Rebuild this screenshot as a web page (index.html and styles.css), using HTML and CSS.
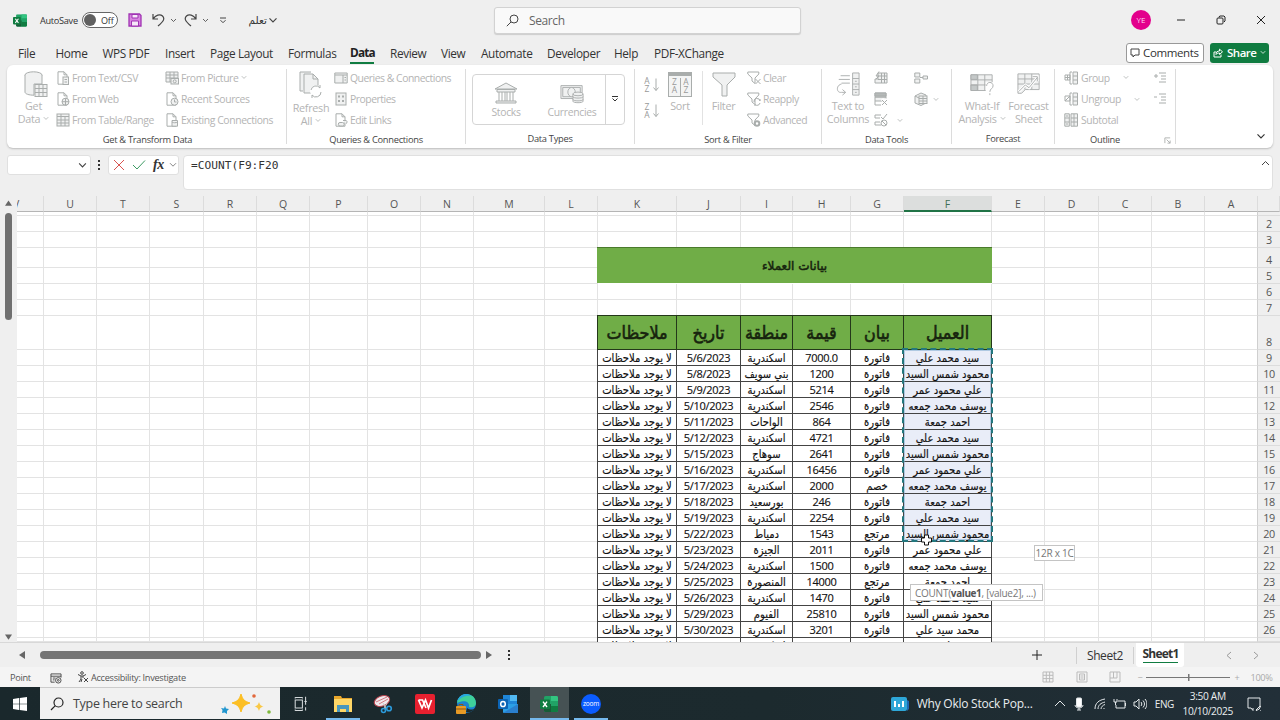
FILE: index.html
```html
<!DOCTYPE html>
<html lang="en">
<head>
<meta charset="utf-8">
<title>Excel</title>
<link rel="stylesheet" href="styles.css">
</head>
<body>
<svg class="defs" width="0" height="0">
  <symbol id="chev" viewBox="0 0 8 6"><path d="M1 1.200 4 4.200 7 1.200"/></symbol>
  <symbol id="doc" viewBox="0 0 14 14"><path class="f" d="M2 .8h6l3 3v9.400H2z"/><path d="M8 .8v3h3"/></symbol>
  <symbol id="funnel" viewBox="0 0 14 14"><path class="f" d="M.8 1h11v2L8 7v5.500L5 10V7L.8 3z"/></symbol>
  <symbol id="xl" viewBox="0 0 18 16"><rect x="4" y="0" width="14" height="16" rx="1.500" fill="#21a366"/><path d="M4 8h7v8H5.500A1.500 1.500 0 0 1 4 14.500z" fill="#185c37"/><path d="M11 0h5.500A1.500 1.500 0 0 1 18 1.500V5h-7z" fill="#33c481"/><path d="M11 10h7v4.500a1.500 1.500 0 0 1-1.500 1.500H11z" fill="#107c41"/><rect x="0" y="3.500" width="10" height="9.500" rx="1" fill="#107c41"/><path d="M3 5.700 7 11M7 5.700 3 11" stroke="#fff" stroke-width="1.400"/></symbol>
</svg>

<header class="titlebar">
  <svg class="app" viewBox="0 0 18 16"><use href="#xl"/></svg>
  <span class="autosave">AutoSave</span>
  <span class="toggle"><i></i>Off</span>
  <svg class="save" viewBox="0 0 14 14"><path d="M1 1h10.500L13 2.500V13H1z" fill="#d884e0" stroke="#a033b3" stroke-width="1.300"/><path d="M4 1.500h6v3.500H4zM3.500 8h7v5h-7z" fill="#f6e8f8" stroke="#a033b3"/></svg>
  <svg class="undo" viewBox="0 0 13 14"><path d="M1 1v5h5M1.300 5.700C3.500 2 8 .8 10.500 3c3 3 .5 5.500-4.500 10"/></svg>
  <svg class="chev c1"><use href="#chev"/></svg>
  <svg class="redo" viewBox="0 0 13 14"><path d="M12 1v5H7M11.700 5.700C9.500 2 5 .8 2.500 3c-3 3-.5 5.500 4.500 10"/></svg>
  <svg class="chev c2"><use href="#chev"/></svg>
  <svg class="custom" viewBox="0 0 8 7"><path d="M1 1h6M1.500 3.200 4 5.700 6.500 3.200"/></svg>
  <span class="docname" dir="rtl">تعلم</span>
  <svg class="chev c3"><use href="#chev"/></svg>
  <div class="search"><svg viewBox="0 0 13 13"><circle cx="8" cy="5" r="4"/><path d="M5 8 .8 12.200"/></svg>Search</div>
  <span class="avatar">YE</span>
  <svg class="win min" viewBox="0 0 10 10"><path d="M1 5h8"/></svg>
  <svg class="win max" viewBox="0 0 10 10"><rect x="1" y="3" width="6" height="6" rx="1"/><path d="M3 2.500V1.800L4 1h4l1 1v4L8 7"/></svg>
  <svg class="win cls" viewBox="0 0 10 10"><path d="M1 1l8 8M9 1 1 9"/></svg>
</header>

<nav class="tabs">
  <span>File</span><span>Home</span><span>WPS PDF</span><span>Insert</span><span>Page Layout</span><span>Formulas</span><span class="on"><b>Data</b></span><span>Review</span><span>View</span><span>Automate</span><span>Developer</span><span>Help</span><span>PDF-XChange</span>
  <div class="comments"><svg viewBox="0 0 10 10"><path d="M1 1h8v6H5L3 9V7H1z"/></svg>Comments</div>
  <div class="share"><svg viewBox="0 0 10 10"><path d="M3.500 4H1v5h7V6.500M3 6.500C3 4 4.500 3 6.500 3V1.200l3 2.600-3 2.600V5C5 5 4 5.300 3 6.500z"/></svg>Share<svg class="sc"><use href="#chev"/></svg></div>
</nav>

<section class="ribbon">
  <div class="group g1">
    <div class="body">
      <div class="big"><svg viewBox="0 0 24 27"><ellipse class="f" cx="9.500" cy="4" rx="8.500" ry="3.200"/><path class="f" d="M1 4v17c0 2 4 3.200 9 3.200V13h8V4"/><rect class="f" x="11" y="13.500" width="12" height="12"/><path d="M11 17.500h12M11 21.500h12M15 14v11M19 14v11"/></svg><span>Get</span><span>Data <svg class="mc"><use href="#chev"/></svg></span></div>
      <div class="list">
        <div><svg viewBox="0 0 14 14"><use href="#doc"/><rect class="f" x="7" y="6" width="5.500" height="7.500"/><path d="M8.500 8.500h2.500M8.500 11h2.500"/></svg>From Text/CSV</div>
        <div><svg viewBox="0 0 14 14"><use href="#doc"/><circle class="f" cx="9.500" cy="9.700" r="3.500"/><path d="M6 9.700h7M9.500 6.200v7"/></svg>From Web</div>
        <div><svg viewBox="0 0 14 14"><rect class="f" x="1" y="1" width="12" height="12"/><path d="M1 3.500h12M1 7h12M1 10h12M5 1v12M9 3v10"/></svg>From Table/Range</div>
      </div>
      <div class="list">
        <div><svg viewBox="0 0 14 14"><path class="f" d="M1 1h12v10H1z"/><path d="M1 4h12M1 7h12M5 1v10M9 1v6"/><rect class="f" x="6" y="7.500" width="7.500" height="5.500"/><circle cx="9.700" cy="10.300" r="1.500"/></svg>From Picture <svg class="mc"><use href="#chev"/></svg></div>
        <div><svg viewBox="0 0 14 14"><use href="#doc"/><circle class="f" cx="9.500" cy="9.700" r="3.500"/><path d="M9.500 7.500v2.500h2"/></svg>Recent Sources</div>
        <div><svg viewBox="0 0 14 14"><use href="#doc"/><path class="f" d="M7 7.500h5.500v5.700H7zM7 9c1.500 1 4 1 5.500 0"/></svg>Existing Connections</div>
      </div>
    </div>
    <div class="label">Get &amp; Transform Data</div>
  </div>
  <div class="group g2">
    <div class="body">
      <div class="big low"><svg viewBox="0 0 24 27"><path class="f" d="M4 20H1V1h11"/><path class="f" d="M5 3h9l5 5v14H5z"/><path d="M14 3v5h5"/><circle cx="17" cy="20" r="6" fill="#fff" stroke="none"/><path d="M12 19a5 5 0 0 1 9-2v-3M22 21a5 5 0 0 1-9 3v3"/></svg><span>Refresh</span><span>All <svg class="mc"><use href="#chev"/></svg></span></div>
      <div class="list">
        <div><svg viewBox="0 0 14 14"><path class="f" d="M.8 2h12.400v10H.8z"/><path d="M1 4h12M9 4v8M10.500 6.500h1.500M10.500 9h1.500"/></svg>Queries &amp; Connections</div>
        <div><svg viewBox="0 0 14 14"><rect class="f" x="2" y="1" width="10" height="12"/><path d="M4 4.500h2M4 9h2M8 4.500h2M8 9h2" stroke-width="2"/></svg>Properties</div>
        <div><svg viewBox="0 0 14 14"><use href="#doc"/><path class="f" d="M6 9.500h2.500a1.500 1.500 0 0 1 0 3.500H6a1.500 1.500 0 0 1 0-3.500M9 7.500h2a1.500 1.500 0 0 1 1 3"/></svg>Edit Links</div>
      </div>
    </div>
    <div class="label">Queries &amp; Connections</div>
  </div>
  <div class="group g3">
    <div class="body">
      <div class="gallery">
        <div><svg viewBox="0 0 24 22"><path class="f" d="M1 7 12 1l11 6zM3 7.500h18V10H3zM2 19h20v2H2z"/><path d="M5 10v9M8 10v9M11 10v9M13 10v9M16 10v9M19 10v9"/></svg>Stocks</div>
        <div><svg viewBox="0 0 26 22"><path class="f" d="M1 3h23v14H1z"/><path d="M3 5h19v10H3z"/><ellipse class="f" cx="12.500" cy="10" rx="4" ry="5"/><path class="f" d="M14 12v8c0 2 11 2 11 0v-8z"/><ellipse class="f" cx="19.500" cy="12" rx="5.500" ry="2"/><path d="M14 15c0 2 11 2 11 0M14 18c0 2 11 2 11 0"/></svg>Currencies</div>
        <div class="more"><svg viewBox="0 0 8 7"><path d="M1 1h6M1.500 3 4 5.500 6.500 3"/></svg></div>
      </div>
    </div>
    <div class="label">Data Types</div>
  </div>
  <div class="group g4">
    <div class="body">
      <div class="az">
        <div><i>A<br>Z</i><svg viewBox="0 0 6 14"><path d="M3 1v12M.5 10 3 13l2.500-3"/></svg></div>
        <div><i>Z<br>A</i><svg viewBox="0 0 6 14"><path d="M3 1v12M.5 10 3 13l2.500-3"/></svg></div>
      </div>
      <div class="big sort"><div class="sorticon"><i>Z<br>A</i><i>A<br>Z</i></div><span>Sort</span></div>
      <div class="big filter"><svg viewBox="0 0 24 27"><path class="f" d="M1 2h22v4l-8 8v11H10V14L1 6z"/></svg><span>Filter</span></div>
      <div class="list">
        <div><svg viewBox="0 0 14 14"><use href="#funnel"/><path d="M8.500 8l5 5M13.500 8l-5 5"/></svg>Clear</div>
        <div><svg viewBox="0 0 14 14"><use href="#funnel"/><path d="M7 10a3 3 0 0 1 6-1V7M13 11a3 3 0 0 1-5 1.500V14"/></svg>Reapply</div>
        <div><svg viewBox="0 0 14 14"><use href="#funnel"/><circle cx="10" cy="10.500" r="2.300" stroke-width="2"/></svg>Advanced</div>
      </div>
    </div>
    <div class="label">Sort &amp; Filter</div>
  </div>
  <div class="group g5">
    <div class="body">
      <div class="big"><svg viewBox="0 0 26 27"><path d="M5 4h10M3 8h12M6 12h9M6 13C0 14 0 23 6 22h4M7 19l3.500 3L7 25"/><path class="f" d="M18 1h7v24h-7z"/><path d="M18 7h7M18 13h7M18 19h7M20.500 10h2M20.500 16h2M20.500 22h2"/></svg><span>Text to</span><span>Columns</span></div>
      <div class="tools">
        <svg viewBox="0 0 14 14"><path class="f" d="M4 2h9v10H1V8h3zM4 5h9M4 8.500h9M7.500 2v10M10.500 2v10M5 .5 2 5h3L2 8"/></svg>
        <svg viewBox="0 0 14 14"><path class="f" d="M1 1h11v4H1zM1 5h11v4H1z"/><path d="M1 1h11v3H1z" fill="#b5b9b8"/><path d="M1 9v4h6"/><path d="M8 7l5 6M13 7l-5 6" stroke="#fff" stroke-width="3"/><path d="M8 8l5 5M13 8l-5 5"/></svg>
        <svg viewBox="0 0 14 14"><path d="M7 2H1v3h5M6 9H1v3h6M7 4l2 2 4-5"/><circle cx="10" cy="10" r="3"/><path d="M8 8l4 4"/></svg>
      </div>
      <div class="tools t2"><svg class="mc"><use href="#chev"/></svg></div>
      <div class="tools t3">
        <svg viewBox="0 0 14 14"><path class="f" d="M.8 2h5v4h-5zM.8 8h5v4h-5zM9 5h4.500v3H9z"/><path d="M6 6.500h3"/></svg>
        <div class="pair"><svg viewBox="0 0 14 14"><path class="f" d="M1 4 7 1l5 2v8l-5 2.500L1 11z"/><rect class="f" x="5" y="4" width="8" height="7.500"/><path d="M5 6.500h8M5 9h8M9 4v7M1 4l4 2"/></svg><svg class="mc"><use href="#chev"/></svg></div>
      </div>
    </div>
    <div class="label">Data Tools</div>
  </div>
  <div class="group g6">
    <div class="body">
      <div class="big"><svg viewBox="0 0 26 27"><path class="f" d="M1 3h23v17H1z"/><path d="M1 3h7v5H1zM1 14h7v6H1z" fill="#c4c8c8"/><path d="M1 8.500h23M1 14h23M8.500 3v17M16 3v17"/><rect x="17" y="11" width="9" height="16" fill="#fff" stroke="none"/><path d="M18 15c0-5 7-5 7 0 0 3-3.500 3-3.500 6.500M21.500 23v2"/></svg><span>What-If</span><span>Analysis <svg class="mc"><use href="#chev"/></svg></span></div>
      <div class="big"><svg viewBox="0 0 26 27"><path class="f" d="M1 2h23v17H9l-4 4H1z"/><path d="M1 7.500h23M1 13h23M8.500 2v17M16 2v17"/><path d="M2 21l7-7 4 3 9-11M17 5h5v5" stroke="#fff" stroke-width="3"/><path d="M2 21l7-7 4 3 9-11M17 5h5v5"/></svg><span>Forecast</span><span>Sheet</span></div>
    </div>
    <div class="label">Forecast</div>
  </div>
  <div class="group g7">
    <div class="body">
      <div class="list">
        <div><svg viewBox="0 0 14 14"><path class="f" d="M9 1h4.500v12H9z"/><path d="M9 5h4.500M9 9h4.500M8 1H6v12h2M1 4h5v5H1zM1 6.500h5M3.500 4v5"/></svg>Group <svg class="mc m1"><use href="#chev"/></svg></div>
        <div><svg viewBox="0 0 14 14"><path class="f" d="M9 1h4.500v12H9z"/><path d="M9 5h4.500M9 9h4.500M8 1H6v12h2M1 4h5v5H1zM1 9l5-5"/></svg>Ungroup <svg class="mc m2"><use href="#chev"/></svg></div>
        <div><svg viewBox="0 0 14 14"><path class="f" d="M.8.8h4.500v12.400H.8zM7 .8h6.500v12.400H7z"/><path d="M.8 5h4.500M.8 9h4.500M7 5h6.500M7 9h6.500M10 1v12M3 2v2M3 10v2"/></svg>Subtotal</div>
      </div>
      <div class="tools t4">
        <svg viewBox="0 0 14 14"><path d="M1 5h4M3 3v4M6 2h7M8 5h5M8 8h5M6 11h7"/></svg>
        <svg viewBox="0 0 14 14"><path d="M1 5h3M6 2h7M8 5h5M8 8h5M6 11h7"/></svg>
      </div>
    </div>
    <div class="label">Outline<svg class="dlg" viewBox="0 0 8 8"><path d="M1 7V1h6M3 3l4 4M7 4v3H4"/></svg></div>
  </div>
  <svg class="collapse"><use href="#chev"/></svg>
</section>

<section class="formula">
  <div class="namebox"><svg><use href="#chev"/></svg></div>
  <svg class="dots" viewBox="0 0 4 12"><path d="M1 1h2v2H1zM1 5h2v2H1zM1 9h2v2H1z"/></svg>
  <div class="fx"><svg viewBox="0 0 12 12"><path d="M1 1l10 10M11 1 1 11" stroke="#d9534f"/></svg><svg viewBox="0 0 14 12"><path d="M1 6l4 4 8-8.500" stroke="#3c9a62"/></svg><em>fx</em><svg class="mc"><use href="#chev"/></svg></div>
  <div class="input">=COUNT(F9:F20<svg><path d="M1 5 4.500 1.500 8 5"/></svg></div>
</section>

<main class="work">
  <div class="vscroll"><svg viewBox="0 0 8 6"><path d="M4 0 8 6H0z"/></svg><i></i><svg viewBox="0 0 8 6"><path d="M0 0h8L4 6z"/></svg></div>
  <div class="sheet" id="sheet"></div>
  <div class="tip size">12R x 1C</div>
  <div class="tip args">COUNT(<b>value1</b>, [value2], ...)</div>
  <svg class="cursor" viewBox="0 0 12 12"><path d="M4 1h4v3h3v4H8v3H4V8H1V4h3z"/></svg>
</main>

<section class="sheetbar">
  <svg class="la" viewBox="0 0 6 8"><path d="M6 0v8L0 4z"/></svg><i></i><svg class="ra" viewBox="0 0 6 8"><path d="M0 0v8l6-4z"/></svg>
  <svg class="dots" viewBox="0 0 4 12"><path d="M1 1h2v2H1zM1 5h2v2H1zM1 9h2v2H1z"/></svg>
  <svg class="plus" viewBox="0 0 10 10"><path d="M5 0v10M0 5h10"/></svg>
  <span class="s2">Sheet2</span><span class="s1"><b>Sheet1</b></span>
  <svg class="nav n1" viewBox="0 0 6 9"><path d="M5 1 1 4.500 5 8"/></svg><svg class="nav" viewBox="0 0 6 9"><path d="M1 1l4 3.500L1 8"/></svg>
</section>

<section class="status">
  <span class="point">Point</span>
  <svg class="macro" viewBox="0 0 13 12"><path d="M1 10V1h11v4M1 3.500h11M3 5.500h3M3 7.500h2M1 10h4"/><circle cx="9" cy="8" r="3"/><circle cx="9" cy="8" r="1"/></svg>
  <svg class="acc" viewBox="0 0 12 12"><circle cx="5" cy="2" r="1.300"/><path d="M1 3.500 4 5v3l-2 3M9 3.500 6 5v2M4 5h2M5 8l-1 3M7 7l4 4M11 7l-4 4"/></svg>
  <span class="acctext">Accessibility: Investigate</span>
  <svg class="v" viewBox="0 0 12 12"><path d="M1 1h10v10H1zM1 4.300h10M1 7.600h10M4.300 1v10M7.600 1v10"/></svg>
  <svg class="v" viewBox="0 0 12 12"><path d="M1 1h10v10H1zM3.500 3h5v6h-5zM4.500 5h3M4.500 7h3"/></svg>
  <svg class="v" viewBox="0 0 12 12"><path d="M1 1h10v10H1zM4.500 1v6H1M8 1v6H4.500"/></svg>
  <div class="zoom"><span>−</span><i></i><span>+</span><em>100%</em></div>
</section>

<footer class="taskbar">
  <div class="start"><svg viewBox="0 0 14 14"><path d="M0 2l6-1v5.700H0zM6.700.9 14 0v6.700H6.700zM0 7.300h6V13l-6-1zM6.700 7.300H14V14l-7.300-1z"/></svg></div>
  <div class="find"><svg class="mag" viewBox="0 0 14 14"><circle cx="8.500" cy="5.500" r="4.500"/><path d="M5.300 8.700 1 13"/></svg><span>Type here to search</span>
    <svg class="spark" viewBox="0 0 52 22"><path d="M20 1c2 6 3 7 9 9-6 2-7 3-9 9-2-6-3-7-9-9 6-2 7-3 9-9z" fill="#fcbf24" stroke="#fcbf24" stroke-linejoin="round"/><path d="M38 9c1 3 1.500 3.500 4.500 4.500-3 1-3.500 1.500-4.500 4.500-1-3-1.500-3.500-4.500-4.500 3-1 3.500-1.500 4.500-4.500z" fill="#f9c846"/><path d="M4 13l1 2.500 3 .5-2 2v3l-2.500-1.500L1 20l.5-3L0 15l3 .5z" fill="#2196cf"/><circle cx="33" cy="3" r="1.800" fill="#e2683c"/><circle cx="48" cy="19" r="1.800" fill="#7eb93b"/></svg></div>
  <div class="apps">
    <div><svg viewBox="0 0 20 20"><path d="M4 5h9v10H4zM4 3V1.500M13 3V1.500M4 17v1.500M13 17v1.500M17 1v10M17 14v4M15.500 7h3M4 2h9M4 18h9" fill="none" stroke="#d5dadc" stroke-width="1.300"/></svg></div>
    <div class="run"><svg viewBox="0 0 20 20"><path d="M1 2h7l1 2h10v14H1z" fill="#e9a72c"/><path d="M1 5h18v13H1z" fill="#ffd767"/><path d="M4 18v-7h12v7h-3v-3H7v3z" fill="#4a97bd"/></svg></div>
    <div><svg viewBox="0 0 20 20"><ellipse cx="9" cy="7" rx="8" ry="5" transform="rotate(-20 9 7)" fill="#f1e9ec" stroke="#b7424c"/><path d="M3 8l11-5M6 10l9-5" stroke="#d37a83"/><path d="M10 9l3 6M14 9l-3 6" stroke="#ccc"/><circle cx="10.500" cy="16.500" r="2" fill="none" stroke="#2b9bdc" stroke-width="1.600"/><circle cx="16" cy="14.500" r="2.300" fill="none" stroke="#2b9bdc" stroke-width="1.600"/></svg></div>
    <div><svg viewBox="0 0 20 20"><rect width="20" height="20" rx="2" fill="#e8202f"/><path d="M3.500 6l3.500 8 3.500-8 3 8 3-8M3.500 6h4l3.500 8" fill="none" stroke="#fff" stroke-width="1.700"/></svg></div>
    <div><svg viewBox="0 0 20 20"><circle cx="10.500" cy="9.500" r="9.500" fill="#1a82cf"/><path d="M1 9C2-2 19-3 20 9c0 4-4 5-7 4 1-5-4-8-12-4z" fill="#3fcf9a"/><path d="M1 8C3 0 11-2 15 2 9 1 4 4 1 8z" fill="#27a7e0"/><path d="M11 14c3 2 6 2 8 0-2 4-6 5-9 4z" fill="#1b2a2f"/><rect x="0" y="12" width="10" height="8" rx="1" fill="#e89a25"/><path d="M0 15h10M3 12v-1.500h4V12" stroke="#8d5713" fill="none"/></svg></div>
    <div><svg viewBox="0 0 20 20"><rect x="5" y="1" width="14" height="12" fill="#1f86d8"/><path d="M12 1h7v6h-7z" fill="#51b9f2"/><path d="M5 10h15v8a1 1 0 0 1-1 1H6a1 1 0 0 1-1-1z" fill="#2b9fe6"/><path d="M5 19 20 10v9z" fill="#2a7fce"/><rect x="0" y="5" width="10" height="10" rx="1" fill="#0b64b5"/><ellipse cx="5" cy="10" rx="2.300" ry="2.600" fill="none" stroke="#fff" stroke-width="1.500"/></svg></div>
    <div class="run active"><svg viewBox="0 0 18 16"><use href="#xl"/></svg></div>
    <div class="run"><span class="zm">zoom</span></div>
  </div>
  <svg class="news" viewBox="0 0 18 14"><rect width="16" height="14" rx="2" fill="#2ea7d8"/><path d="M16 3l2 1v8l-2 2z" fill="#1b68b3"/><path d="M4 4v6M8 7v3M12 4v6" stroke="#fff" stroke-width="2"/></svg>
  <span class="headline">Why Oklo Stock Pop...</span>
  <svg class="tray a" viewBox="0 0 10 14"><path d="M0 9l5-5 5 5"/></svg>
  <svg class="tray b" viewBox="0 0 10 14"><rect x="2.500" y="1" width="5" height="9" rx="1" fill="#fff"/><path d="M1 8c0 4 8 4 8 0M5 11v2M3 13h4"/></svg>
  <svg class="tray wifi" viewBox="0 0 12 14"><path d="M1 12C1 6 5 3 11 2M4 12c0-4 3-6 7-7M7 12c0-2 2-4 4-4.500M10 12v-1"/></svg>
  <svg class="tray bat" viewBox="0 0 14 14"><path d="M5 4h7v7H3V8M12.500 6v3M1 2v3h3V2M2.500 5v3"/></svg>
  <svg class="tray e" viewBox="0 0 14 14"><path d="M1 5h2l3-3v10L3 9H1zM8 5c1 1 1 3 0 4M10 3.500c2 2 2 5 0 7M12 2c2.500 3 2.500 7 0 10"/></svg>
  <span class="lang">ENG</span>
  <div class="clock"><span>3:50 AM</span><span>10/10/2025</span></div>
  <svg class="tray g" viewBox="0 0 14 14"><path d="M1 1h12v8M13 9l-4 4M1 1v10h3l2 2.500V11M13 9a3 3 0 1 1-4 4c3 0 4-1 4-4z"/></svg>
</footer>
<script src="sheet.js"></script>
</body>
</html>
```
FILE: styles.css
```css
* { box-sizing: border-box; }
body { margin: 0; width: 1280px; height: 720px; overflow: hidden; background: #efefef; font-family: "Open Sans", "Noto Sans", "DejaVu Sans", sans-serif; font-size: 12px; color: #333; display: flex; flex-direction: column; }
svg { fill: none; stroke: #444; stroke-width: 1; flex: none; display: block; }
.defs { position: absolute; }
i, em { font-style: normal; }
span, div { white-space: nowrap; }

.titlebar { height: 40px; display: flex; align-items: center; flex: none; padding-left: 13px; }
.app { width: 14px; height: 13px; stroke: none; }
.autosave { width: 42px; margin-left: 13px; font-size: 9.200px; letter-spacing: -.3px; }
.toggle { width: 36px; height: 16px; border: 1px solid #666; border-radius: 8px; background: #fff; display: flex; align-items: center; gap: 5px; padding-left: 1px; font-size: 9px; letter-spacing: -.2px; }
.toggle i { width: 12px; height: 12px; border-radius: 6px; background: #606060; }
.save { width: 14px; height: 14px; margin-left: 10px; }
.undo, .redo { width: 13px; height: 14px; margin-left: 10px; stroke-width: 1.200; }
.chev { width: 7px; height: 5px; }
.c1 { margin-left: 5px; }
.redo { margin-left: 7px; }
.c2 { margin-left: 5px; }
.custom { width: 8px; height: 7px; margin-left: 10px; }
.docname { width: 21px; margin-left: 19px; font: 10.500px "DejaVu Sans", sans-serif; }
.c3 { width: 10px; height: 7px; margin-left: 1px; }
.search { width: 307px; height: 27px; margin-left: 216px; border: 1px solid #d2d2d2; border-radius: 3px; background: #f9f9f9; display: flex; align-items: center; gap: 10px; padding-left: 11px; font-size: 12px; letter-spacing: -.4px; color: #666; box-shadow: 0 1px 1px #ccc; }
.search svg { width: 13px; height: 13px; }
.avatar { width: 20px; height: 20px; border-radius: 10px; background: #e3008c; color: #ffd5ef; font-size: 8px; text-align: center; line-height: 20px; margin-left: 330px; }
.win { width: 10px; height: 10px; stroke: #222; margin-left: 30px; }
.min { margin-left: 25px; }

.tabs { height: 25px; flex: none; display: grid; grid-template-columns: 37.500px 47px 62.500px 45px 78px 62px 40px 51px 40px 66px 67px 40px 472px 84px 59px; padding-left: 18px; align-items: center; letter-spacing: -.36px; font-size: 11.800px; }
.tabs .on b { display: inline-block; width: 24px; height: 19px; line-height: 20px; border-bottom: 2px solid #107c41; color: #222; letter-spacing: -.8px; margin-top: 3px; line-height: 15px; }
.comments { width: 78px; height: 20px; border: 1px solid #999; border-radius: 3px; background: #fff; display: flex; align-items: center; gap: 3px; padding-left: 3px; font-size: 11.500px; }
.comments svg, .share svg { width: 10px; height: 10px; }
.share { height: 20px; background: #107c41; border-radius: 3px; color: #fff; display: flex; align-items: center; gap: 4px; padding-left: 3px; font-size: 11.500px; font-weight: 600; letter-spacing: -.5px; }
.share svg { stroke: #fff; }
.share .sc { width: 6px; height: 5px; }

.ribbon { margin: 0 7px; height: 83px; flex: none; background: #fff; border-radius: 6px; display: flex; box-shadow: 0 1px 2px #bbb; font-size: 10.400px; letter-spacing: -.3px; color: #b4b4b4; }
.ribbon svg { stroke: #a9adac; }
.ribbon .f { fill: #f0f1f1; }
.group { position: relative; padding-top: 3px; display: flex; flex-direction: column; background: linear-gradient(#dcdcdc, #dcdcdc) right 4px / 1px 75px no-repeat; }
.body { height: 64px; display: flex; }
.label { height: 18px; line-height: 18px; text-align: center; color: #444; font-size: 9.300px; letter-spacing: -.28px; padding-right: 1px; }
.g1 .label { padding-left: 2px; }
.g1 { width: 280px; } .g2 { width: 179px; } .g3 { width: 169px; } .g4 { width: 187px; } .g5 { width: 130px; } .g6 { width: 103px; } .g7 { width: 121px; }
.big { display: flex; flex-direction: column; align-items: center; padding-top: 3px; font-size: 10.800px; line-height: 13.300px; }
.big > svg { width: 24px; height: 27px; margin-bottom: 1px; }
.big.low > svg { margin-bottom: 3px; }
.big span { display: flex; align-items: center; gap: 3px; }
.mc { width: 6px; height: 5px; }
.list { display: grid; grid-template-rows: 21.400px 21.400px 21.400px; margin-top: -1px; letter-spacing: -.4px; }
.list > div { display: flex; align-items: center; gap: 2px; }
.list > div > svg:first-child { width: 14px; height: 14px; }
.list .mc { margin-left: 1px; }
.g1 .big { width: 53px; } .g1 .big > svg { margin-left: 5px; }
.g1 .list { width: 109px; margin-left: -4px; } .g1 .list + .list { margin-left: 0; }
.g2 .big { width: 48px; }
.g2 .list { margin-left: -1px; letter-spacing: -.48px; }
.g3 .gallery { display: grid; grid-template-columns: 66px 66px 19px; width: 153px; height: 51px; margin: 6px 0 0 6px; border: 1px solid #d5d5d5; border-radius: 4px; color: #b4b4b4; }
.gallery > div { display: flex; flex-direction: column; align-items: center; padding-top: 7px; line-height: 13px; gap: 2px; }
.gallery svg { width: 24px; height: 22px; }
.gallery .more { border-left: 1px solid #d5d5d5; padding-top: 20px; }
.gallery .more svg { width: 8px; height: 8px; stroke: #333; }
.az { width: 29px; padding: 9px 0 0 9px; display: flex; flex-direction: column; gap: 10px; }
.az > div { display: flex; gap: 3px; }
.az i, .sorticon i { font-size: 8.500px; line-height: 8px; color: #999; letter-spacing: 0; }
.az i { width: 6px; text-align: center; }
.az svg { width: 6px; height: 15px; }
.g4 .sort { width: 32px; padding-top: 4px; }
.sorticon { width: 24px; height: 25px; border: 1px solid #a9adac; border-top-width: 4px; background: #f3f4f4; display: grid; grid-template-columns: 1fr 1fr; text-align: center; margin-bottom: 2px; padding-top: 2px; }
.sorticon i + i { border-left: 1px solid #a9adac; }
.g4 .filter { width: 42px; margin: 3px 0 6px 6px; border-left: 1px solid #e2e2e2; padding-top: 0; }
.g4 .list { margin-left: 3px; }
.g5 .big { width: 52px; }
.tools { display: grid; grid-template-rows: repeat(3, 21.400px); align-items: center; width: 18px; margin-top: -1px; }
.tools svg { width: 14px; height: 14px; }
.tools .mc, .pair .mc { width: 6px; height: 5px; }
.t2 .mc { grid-row: 3; margin-left: 5px; }
.t3 { margin-left: 4px; width: 26px; }
.pair { display: flex; align-items: center; gap: 5px; }
.g6 .big { width: 45px; } .g6 .big:first-child { margin-left: 6px; width: 48px; }
.g7 .list { width: 89px; margin-left: 9px; gap: 0; }
.g7 .list > div { gap: 3px; }
.g7 .list .m1 { margin-left: 10px; } .g7 .list .m2 { margin-left: 10px; }
.g7 .label { display: flex; justify-content: center; padding-left: 31px; gap: 44px; align-items: center; }
.dlg { width: 7px; height: 7px; }
.ribbon .collapse { width: 10px; height: 7px; margin: 68px 0 0 80px; stroke: #333; }

.formula { height: 48px; flex: none; padding: 7px 7px 0; display: flex; align-items: flex-start; }
.namebox { width: 84px; height: 20px; background: #fff; border: 1px solid #e0e0e0; border-radius: 3px; display: flex; justify-content: flex-end; align-items: center; padding-right: 3px; }
.namebox svg { width: 9px; height: 7px; }
.dots { width: 4px; height: 12px; fill: #333; stroke: none; }
.formula .dots { margin: 4px 7px 0 6px; }
.fx { width: 71px; height: 20px; background: #fff; border: 1px solid #e0e0e0; border-radius: 3px; display: flex; align-items: center; padding-left: 4px; }
.fx svg { width: 12px; height: 12px; }
.fx svg + svg { width: 14px; margin-left: 7px; }
.fx em { font: italic bold 14px "Liberation Serif", serif; margin-left: 7px; width: 14px; letter-spacing: -.3px; }
.fx .mc { width: 8px !important; height: 6px; margin-left: 2px !important; stroke: #888; }
.input { flex: 1; margin-left: 4px; height: 35px; background: #fff; border: 1px solid #e0e0e0; border-radius: 4px; padding: 2px 2px 0 7px; display: flex; justify-content: space-between; font: 11.200px/15px "DejaVu Sans Mono", monospace; }
.input svg { width: 9px; height: 7px; margin-top: 2px; }

.work { height: 446px; flex: none; display: flex; position: relative; overflow: hidden; }
.vscroll { width: 17px; display: flex; flex-direction: column; align-items: center; padding-top: 4px; }
.vscroll svg { width: 7px; height: 6px; fill: #666; stroke: none; }
.vscroll i { width: 7px; height: 107px; border-radius: 4px; background: #707070; margin: 7px 0 314px; }
.sheet { display: grid; background: #fff; grid-template-columns: 27px 53px 53px 54px 53px 53px 58px 53px 53px 71px 53px 79px 64px 52px 58px 53px 88px 53px 54px 53px 53px 53px 22px; grid-template-rows: 16px 4px 16px 16px 20px 16px 16px 16px 34px repeat(18, 16px) 4px; }
.c { border-right: 1px solid #e3e3e3; border-bottom: 1px solid #e3e3e3; min-width: 0; }
.h { background: #efefef; border-right: 1px solid #dcdcdc; border-bottom: 1px solid #b5b5b5; text-align: center; line-height: 17px; font-size: 10.500px; color: #555; min-width: 0; overflow: hidden; }
.h.edge { text-align: left; text-indent: -4px; }
.h.sel { background: #dcdedd; border-bottom: 2px solid #217346; color: #3f6f55; }
.r { background: #efefef; border-left: 1px solid #cfcfcf; border-bottom: 1px solid #dcdcdc; display: flex; align-items: flex-end; justify-content: center; line-height: 15px; font-size: 10.800px; letter-spacing: -.3px; color: #555; overflow: hidden; min-height: 0; margin-left: -1px; }
.banner { background: #70ad47; border-top: 1px solid #4a7a2c; margin: -1px 0 1px -1px; display: flex; align-items: center; justify-content: center; font: 12px "DejaVu Sans", sans-serif; -webkit-text-stroke: .5px #17240e; color: #17240e; }
.d { border-right: 1px solid #444; border-bottom: 1px solid #444; min-width: 0; min-height: 0; overflow: hidden; display: flex; align-items: center; justify-content: center; font: 10px/15px "DejaVu Sans", sans-serif; color: #111; letter-spacing: -.3px; }
.d.first { border-left: 1px solid #444; margin-left: -1px; }
.d span { transform: scaleY(1.150); -webkit-text-stroke: .15px #111; }
.d.num { font: 11px/15px "Open Sans", sans-serif; letter-spacing: -.3px; }
.d.num span { transform: none; }
.d.th { background: #70ad47; border-color: #24381a; border-top: 1px solid #24381a; margin-top: -1px; font-size: 16px; color: #17240e; letter-spacing: -.3px; line-height: 30px; }
.d.th span { -webkit-text-stroke: .55px #17240e; transform: scaleY(1.120); }
.d.cut { align-items: flex-start; border-bottom: 0; }
.d.pick { background: #e9edf8; }
.marquee { border: 2px dashed #23777e; margin: -2px -1px 0 -2px; box-shadow: inset 0 0 0 1px #7ba8cf88; z-index: 1; }
.tip { position: absolute; background: #fff; border: 1px solid #c4c4c4; color: #777; font-size: 10px; letter-spacing: -.25px; display: flex; align-items: center; justify-content: center; }
.tip b { color: #555; letter-spacing: -.4px; }
.size { left: 1034px; top: 349px; width: 41px; height: 16px; }
.args { left: 910px; top: 388px; width: 133px; height: 17px; z-index: 2; white-space: pre; justify-content: flex-start; padding-left: 4px; }
.cursor { position: absolute; left: 920px; top: 338px; width: 13px; height: 12px; fill: #fff; stroke: #111; z-index: 3; }

.sheetbar { height: 25px; flex: none; border-top: 1px solid #d8d8d8; display: flex; align-items: center; padding-left: 19px; font-size: 12px; letter-spacing: -.45px; }
.la, .ra { width: 6px; height: 8px; fill: #666; stroke: none; }
.sheetbar i { width: 441px; height: 8px; border-radius: 4px; background: #757575; margin: 0 5px 0 15px; }
.sheetbar .dots { margin-left: 15px; }
.plus { width: 10px; height: 10px; margin-left: 521px; stroke: #222; }
.s2 { width: 58px; height: 17px; line-height: 18px; text-align: center; margin-left: 34px; border-left: 1px solid #d0d0d0; border-right: 1px solid #d0d0d0; }
.s1 { width: 48px; height: 24px; margin-left: 2px; background: #fff; text-align: center; border-radius: 0 0 3px 3px; }
.s1 b { display: inline-block; height: 20px; line-height: 22px; border-bottom: 1px solid #107c41; letter-spacing: -.8px; width: 35px; }
.nav { width: 6px; height: 9px; stroke: #999; margin-left: 21px; }
.n1 { margin-left: 42px; }

.status { height: 20px; flex: none; background: #f4f4f4; display: flex; align-items: center; padding-left: 10px; font-size: 9.200px; letter-spacing: -.3px; color: #555; }
.point { width: 40px; padding-top: 1px; }
.macro { width: 12px; height: 11px; margin-top: 2px; }
.acc { width: 12px; height: 12px; margin-left: 15px; }
.acctext { width: 946px; padding: 1px 0 0 2px; }
.v { width: 12px; height: 12px; stroke: #bbb; margin-right: 21.500px; }
.acctext + .v { margin-left: 7px; }
.zoom { display: flex; align-items: center; color: #aaa; margin-left: -5px; }
.zoom i { width: 84px; height: 7px; margin: 0 4px; background: linear-gradient(#777, #777) 50% 50% / 100% 1px no-repeat, linear-gradient(#777, #777) 50% 50% / 1.500px 7px no-repeat; }
.zoom em { margin-left: 11px; }

.taskbar { height: 33px; flex: none; background: linear-gradient(90deg, #1a282c, #1c2a2e 60%, #222f38); display: flex; align-items: center; color: #e9edef; }
.start { width: 40px; display: flex; justify-content: center; }
.start svg { width: 14px; height: 14px; fill: #fff; stroke: none; }
.find { width: 240px; height: 32px; align-self: flex-start; background: #f1f1f1; border-top: 1px solid #ccc; color: #444; display: flex; align-items: center; padding-left: 10px; font-size: 12.500px; letter-spacing: -.3px; }
.find .mag { width: 14px; height: 14px; stroke: #222; stroke-width: 1.200; }
.find span { margin-left: 9px; width: 148px; }
.spark { width: 52px; height: 22px; stroke: none; }
.apps { display: grid; grid-template-columns: repeat(8, 41.600px); height: 33px; margin-left: -1px; }
.apps > div { display: flex; align-items: center; justify-content: center; }
.apps svg { width: 20px; height: 20px; stroke: none; }
.apps > div:first-child svg { width: 16px; }
.run { background: linear-gradient(#76b9ed, #76b9ed) 50% 100% / 34px 2px no-repeat; }
.run:nth-child(2) { padding-left: 3px; background-position: 70% 100%; }
.apps .active { background: linear-gradient(#76b9ed, #76b9ed) 50% 100% / 100% 2px no-repeat, #465254; margin: 0 1px; }
.apps .active svg { width: 18px; height: 18px; }
.zm { width: 20px; height: 20px; border-radius: 10px; background: #0b5cff; color: #fff; font-size: 6.500px; line-height: 19px; text-align: center; letter-spacing: -.2px; }
.news { width: 18px; height: 14px; stroke: none; margin-left: 279px; }
.headline { width: 118px; margin-left: 8px; font-size: 12px; letter-spacing: -.25px; }
.tray { height: 14px; stroke: #e4e8ea; }
.a { width: 10px; margin-left: 20px; }
.b { width: 10px; margin-left: 9px; }
.wifi { width: 12px; margin-left: 10px; }
.bat { width: 14px; margin-left: 7px; }
.e { width: 14px; margin-left: 6px; }
.lang { width: 20px; margin-left: 8px; font-size: 10px; letter-spacing: -.4px; }
.clock { width: 52px; margin-left: 7px; display: flex; flex-direction: column; align-items: center; font-size: 10.200px; line-height: 15px; letter-spacing: -.35px; }
.g { width: 14px; margin-left: 13px; }
```
FILE: sheet.js
```js
const sheet = document.getElementById("sheet");
const letters = ["V", ..."UTSRQPONMLKJIHGFEDCBA"];
const K = 12, F = 17, lastRow = 28;

function add(cls, row, col, text, rowSpan = 1, colSpan = 1) {
  const el = document.createElement("div");
  el.className = cls;
  el.style.gridArea = `${row} / ${col} / span ${rowSpan} / span ${colSpan}`;
  if (text) {
    const span = document.createElement("span");
    span.textContent = text;
    el.appendChild(span);
  }
  sheet.appendChild(el);
}

letters.forEach((l, i) => add(l === "F" ? "h sel" : i ? "h" : "h edge", 1, i + 1, l));
add("h", 1, 23, "");
for (let r = 2; r <= lastRow; r++) {
  for (let c = 1; c <= 22; c++) {
    const inData = c >= K && c <= F && (r >= 9 || r === 5 || r === 6);
    if (!inData) add("c", r, c, "");
  }
  add("r", r, 23, r === 2 || r === lastRow ? "" : String(r - 1));
}

add("banner", 5, K, "بيانات العملاء", 2, 6);
["ملاحظات", "تاريخ", "منطقة", "قيمة", "بيان", "العميل"].forEach((t, i) =>
  add(i ? "d th" : "d th first", 9, K + i, t));

const note = "لا يوجد ملاحظات";
const names = ["سيد محمد علي", "محمود شمس السيد", "علي محمود عمر", "يوسف محمد جمعه", "احمد جمعة"];
const rows = [
  ["5/6/2023", "اسكندرية", "7000.0", "فاتورة"],
  ["5/8/2023", "بني سويف", "1200", "فاتورة"],
  ["5/9/2023", "اسكندرية", "5214", "فاتورة"],
  ["5/10/2023", "اسكندرية", "2546", "فاتورة"],
  ["5/11/2023", "الواحات", "864", "فاتورة"],
  ["5/12/2023", "اسكندرية", "4721", "فاتورة"],
  ["5/15/2023", "سوهاج", "2641", "فاتورة"],
  ["5/16/2023", "اسكندرية", "16456", "فاتورة"],
  ["5/17/2023", "اسكندرية", "2000", "خصم"],
  ["5/18/2023", "بورسعيد", "246", "فاتورة"],
  ["5/19/2023", "اسكندرية", "2254", "فاتورة"],
  ["5/22/2023", "دمياط", "1543", "مرتجع"],
  ["5/23/2023", "الجيزة", "2011", "فاتورة"],
  ["5/24/2023", "اسكندرية", "1500", "فاتورة"],
  ["5/25/2023", "المنصورة", "14000", "مرتجع"],
  ["5/26/2023", "اسكندرية", "1470", "فاتورة"],
  ["5/29/2023", "الفيوم", "25810", "فاتورة"],
  ["5/30/2023", "اسكندرية", "3201", "فاتورة"],
  ["5/31/2023", "اسكندرية", "", ""],
];
rows.forEach((r, i) => {
  const name = i === 17 ? "محمد سيد علي" : i === 18 ? "علي" : names[i % 5];
  const cut = i === 18 ? " cut" : "";
  [note, ...r, name].forEach((t, j) => {
    let cls = "d" + cut;
    if (j === 0) cls += " first";
    if (j === 1 || j === 3) cls += " num";
    if (j === 5 && i < 12) cls += " pick";
    add(cls, 10 + i, K + j, t);
  });
});
add("marquee", 10, F, "", 12);
```
